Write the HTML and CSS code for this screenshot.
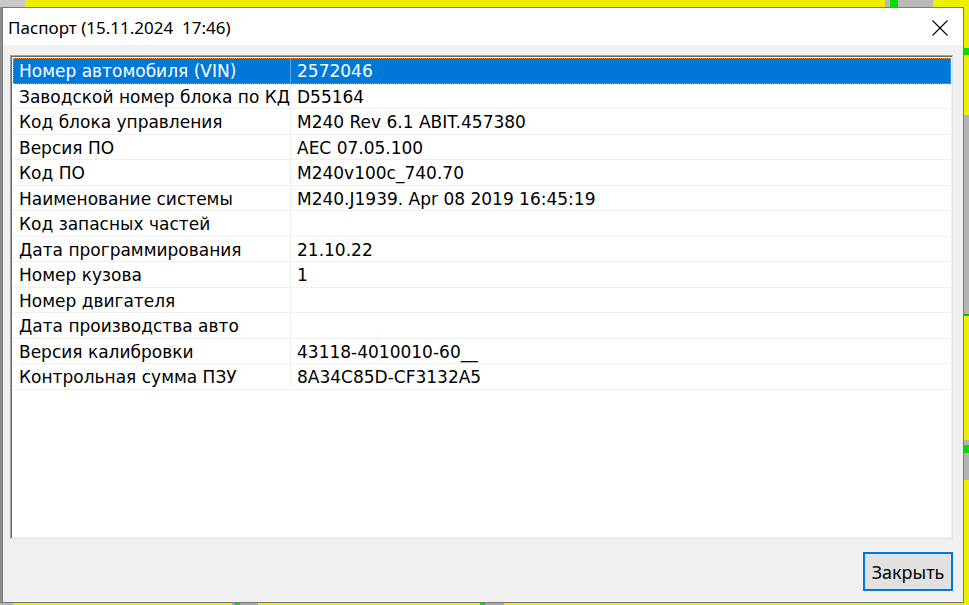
FILE: index.html
```html
<!DOCTYPE html>
<html>
<head>
    <meta charset="utf-8">
    <link rel="stylesheet" href="styles.css">
</head>
<body>
    <div class="desktop">
        <!-- bits of the windows behind the dialog -->
        <div class="bg-strip top-left"></div>
        <div class="bg-strip top-gray"></div>
        <div class="bg-strip top-green"></div>
        <div class="bg-strip right-green1"></div>
        <div class="bg-strip right-gray1"></div>
        <div class="bg-strip right-green2"></div>
        <div class="bg-strip right-gray2"></div>
        <div class="bg-strip right-green3"></div>
        <div class="bg-strip bottom-left"></div>
        <div class="bg-strip bottom-gray1"></div>
        <div class="bg-strip bottom-green1"></div>
        <div class="bg-strip bottom-gray2"></div>
        <div class="bg-strip bottom-green2"></div>
        <div class="bg-strip left-strip"></div>

        <div class="window">
            <div class="titlebar">
                <span class="title">Паспорт (15.11.2024&nbsp; 17:46)</span>
                <span class="close">
                    <svg width="16" height="16" viewBox="0 0 16 16">
                        <path d="M0.5 0.5 L15.5 15.5 M15.5 0.5 L0.5 15.5" stroke="#000" stroke-width="1.1" fill="none"/>
                    </svg>
                </span>
            </div>
            <div class="client">
                <div class="listbox">
                    <div class="rows">
                        <div class="row selected"><div class="cell name">Номер автомобиля (VIN)</div><div class="cell value">2572046</div></div>
                        <div class="row"><div class="cell name">Заводской номер блока по КД</div><div class="cell value">D55164</div></div>
                        <div class="row"><div class="cell name">Код блока управления</div><div class="cell value">M240 Rev 6.1 ABIT.457380</div></div>
                        <div class="row"><div class="cell name">Версия ПО</div><div class="cell value">AEC 07.05.100</div></div>
                        <div class="row"><div class="cell name">Код ПО</div><div class="cell value">M240v100c_740.70</div></div>
                        <div class="row"><div class="cell name">Наименование системы</div><div class="cell value">M240.J1939. Apr 08 2019 16:45:19</div></div>
                        <div class="row"><div class="cell name">Код запасных частей</div><div class="cell value"></div></div>
                        <div class="row"><div class="cell name">Дата программирования</div><div class="cell value">21.10.22</div></div>
                        <div class="row"><div class="cell name">Номер кузова</div><div class="cell value">1</div></div>
                        <div class="row"><div class="cell name">Номер двигателя</div><div class="cell value"></div></div>
                        <div class="row"><div class="cell name">Дата производства авто</div><div class="cell value"></div></div>
                        <div class="row"><div class="cell name">Версия калибровки</div><div class="cell value">43118-4010010-60__</div></div>
                        <div class="row"><div class="cell name">Контрольная сумма ПЗУ</div><div class="cell value">8A34C85D-CF3132A5</div></div>
                    </div>
                </div>
                <div class="footer">
                    <button class="btn-close">Закрыть</button>
                </div>
            </div>
        </div>
    </div>
</body>
</html>
```

FILE: styles.css
```css
body {
    margin: 0;
    overflow: hidden;
}

.desktop {
    position: relative;
    width: 969px;
    height: 605px;
    background: #eeee00;
    padding: 7px 0 0 2px;
    box-sizing: border-box;
}

.bg-strip {
    position: absolute;
}

.top-left { left: 0; top: 0; width: 25px; height: 7px; background: #c8c8c8; }
.top-gray { left: 885px; top: 0; width: 48px; height: 7px; background: #b9b9b9; }
.top-green { left: 890px; top: 0; width: 8px; height: 7px; background: #00e000; }
.right-green1 { right: 0; top: 48px; width: 5px; height: 7px; background: #00e000; }
.right-gray1 { right: 0; top: 115px; width: 5px; height: 200px; background: #b4b4b4; }
.right-green2 { right: 0; top: 314px; width: 5px; height: 2px; background: #00c000; }
.right-gray2 { right: 0; top: 440px; width: 5px; height: 40px; background: #b4b4b4; }
.right-green3 { right: 0; top: 445px; width: 5px; height: 8px; background: #00e000; }
.bottom-left { left: 0; bottom: 0; width: 13px; height: 2px; background: #b4b4b4; }
.bottom-gray1 { left: 232px; bottom: 0; width: 26px; height: 2px; background: #a8a8a8; }
.bottom-green1 { left: 235px; bottom: 0; width: 5px; height: 2px; background: #00e000; }
.bottom-gray2 { left: 480px; bottom: 0; width: 24px; height: 2px; background: #a8a8a8; }
.bottom-green2 { left: 480px; bottom: 0; width: 5px; height: 2px; background: #00e000; }
.left-strip { left: 0; top: 7px; width: 2px; height: 596px; background: #8c8c8c; }

.window {
    width: 962px;
    height: 596px;
    border: 1px solid #7a7a7a;
    box-sizing: border-box;
    background: #f0f0f0;
    display: flex;
    flex-direction: column;
}

.titlebar {
    height: 37px;
    background: #fff;
    display: flex;
    align-items: center;
    justify-content: space-between;
    padding: 0 15px 0 5px;
    flex-shrink: 0;
}

.title {
    font-family: "Noto Sans", "Open Sans", sans-serif;
    font-size: 17px;
    color: #000;
    padding-top: 1px;
}

.close {
    display: flex;
    padding-top: 2px;
}

.client {
    flex: 1;
    display: flex;
    flex-direction: column;
    padding: 10px 10px 0 7px;
}

.listbox {
    height: 484px;
    background: #fff;
    border-top: 1px solid #a0a0a0;
    border-left: 1px solid #a0a0a0;
    border-right: 1px solid #e3e3e3;
    border-bottom: 1px solid #e3e3e3;
    box-shadow: inset 1px 1px 0 #696969, inset -1px -1px 0 #f0f0f0;
    padding: 2px 1px 0 2px;
    box-sizing: border-box;
}

.rows {
    display: flex;
    flex-direction: column;
}

.row {
    display: flex;
    height: 25.5px;
    box-sizing: border-box;
    border-bottom: 1px solid #f0f0f0;
    font-family: "DejaVu Sans", Verdana, sans-serif;
    font-size: 17px;
    color: #000;
}

.cell {
    display: flex;
    align-items: center;
    padding: 2px 0 0 6px;
    white-space: nowrap;
    box-sizing: border-box;
}

.cell.name {
    width: 278px;
    border-right: 1px solid #f0f0f0;
}

.cell.value {
    flex: 1;
}

.row.selected {
    background: #0078d7;
    color: #fff;
    outline: 1px dotted #e08a3a;
    outline-offset: -1px;
    border-bottom-color: #0078d7;
}

.row.selected .cell.name {
    border-right-color: #5aa6e6;
}

.footer {
    flex: 1;
    display: flex;
    justify-content: flex-end;
    align-items: flex-start;
    padding-top: 13px;
}

.btn-close {
    width: 90px;
    height: 39px;
    background: #e1e1e1;
    border: 2px solid #0078d7;
    border-radius: 0;
    font-family: "Noto Sans", "Open Sans", sans-serif;
    font-size: 18px;
    color: #000;
    padding: 0;
    margin-right: 0;
}
```
